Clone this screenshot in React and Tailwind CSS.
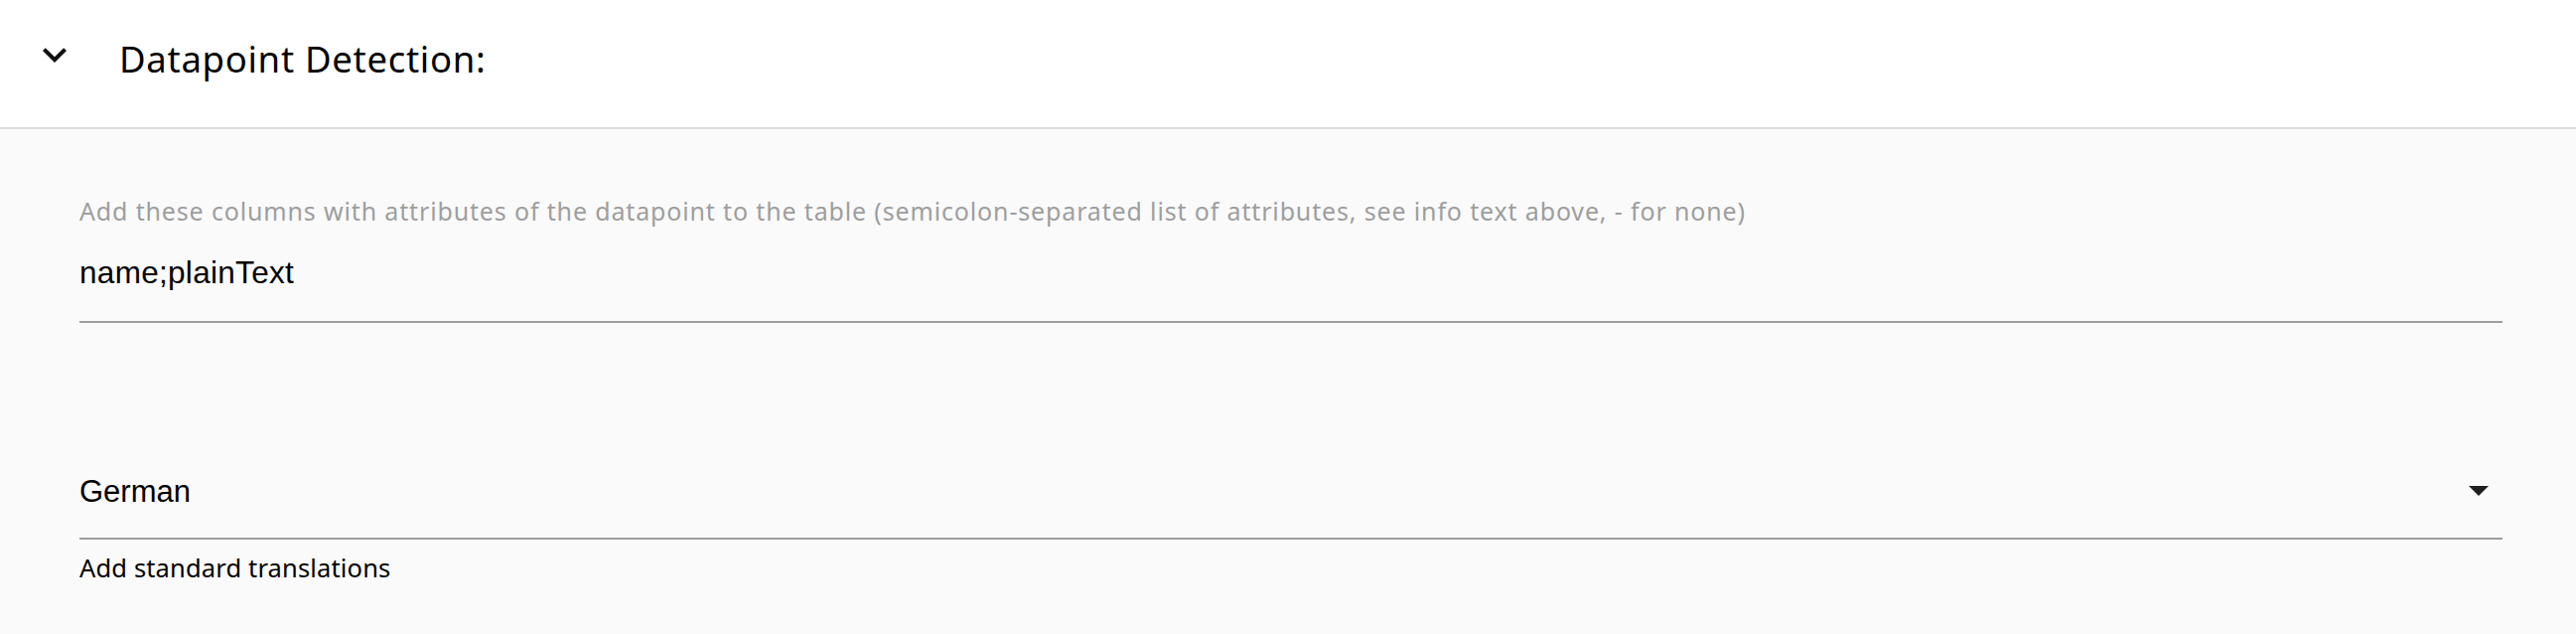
import React from "react";

const humanist = { fontFamily: '"Noto Sans", "Open Sans", sans-serif' };
const grotesk = { fontFamily: '"Liberation Sans", Arial, sans-serif' };

function ExpandMore() {
  return (
    <svg className="w-[48px] h-[48px] shrink-0" viewBox="0 0 24 24" fill="#111">
      <path d="M16.59 8.59L12 13.17 7.41 8.59 6 10l6 6 6-6z" />
    </svg>
  );
}

function ArrowDropDown() {
  return (
    <svg className="w-[20px] h-[10px] shrink-0 mr-[14px]" viewBox="7 10 10 5" fill="#1f1f1f">
      <path d="M7 10l5 5 5-5z" />
    </svg>
  );
}

export default function App() {
  return (
    <div className="w-[2594px] h-[638px] bg-[#fafafa] overflow-hidden">
      {/* Panel header */}
      <div className="h-[130px] bg-white border-b-2 border-[#dcdcdc] flex items-start pl-[31px] pt-[31px]">
        <ExpandMore />
        <div
          className="ml-[41px] mt-[10px] text-[36.5px] leading-none tracking-[0.7px] text-black"
          style={humanist}
        >
          Datapoint Detection:
        </div>
      </div>

      {/* Panel body */}
      <div className="pl-[80px] pr-[74px] pt-[70px] flex flex-col">
        {/* Columns field */}
        <div
          className="text-[25px] leading-none tracking-[0.85px] text-[#9e9e9e] whitespace-nowrap"
          style={humanist}
        >
          Add these columns with attributes of the datapoint to the table (semicolon-separated list of attributes, see info text above, - for none)
        </div>
        <div
          className="mt-[34px] pb-[32px] border-b-2 border-[#9e9e9e] text-[31.5px] leading-none tracking-[0.3px] text-black"
          style={grotesk}
        >
          name;plainText
        </div>

        {/* Translations select */}
        <div className="mt-[154px] pb-[31px] border-b-2 border-[#9e9e9e] flex items-center justify-between">
          <span className="text-[31px] leading-none text-black" style={grotesk}>
            German
          </span>
          <ArrowDropDown />
        </div>
        <div
          className="mt-[16px] text-[25.5px] leading-none tracking-[0.15px] text-black"
          style={humanist}
        >
          Add standard translations
        </div>
      </div>
    </div>
  );
}
